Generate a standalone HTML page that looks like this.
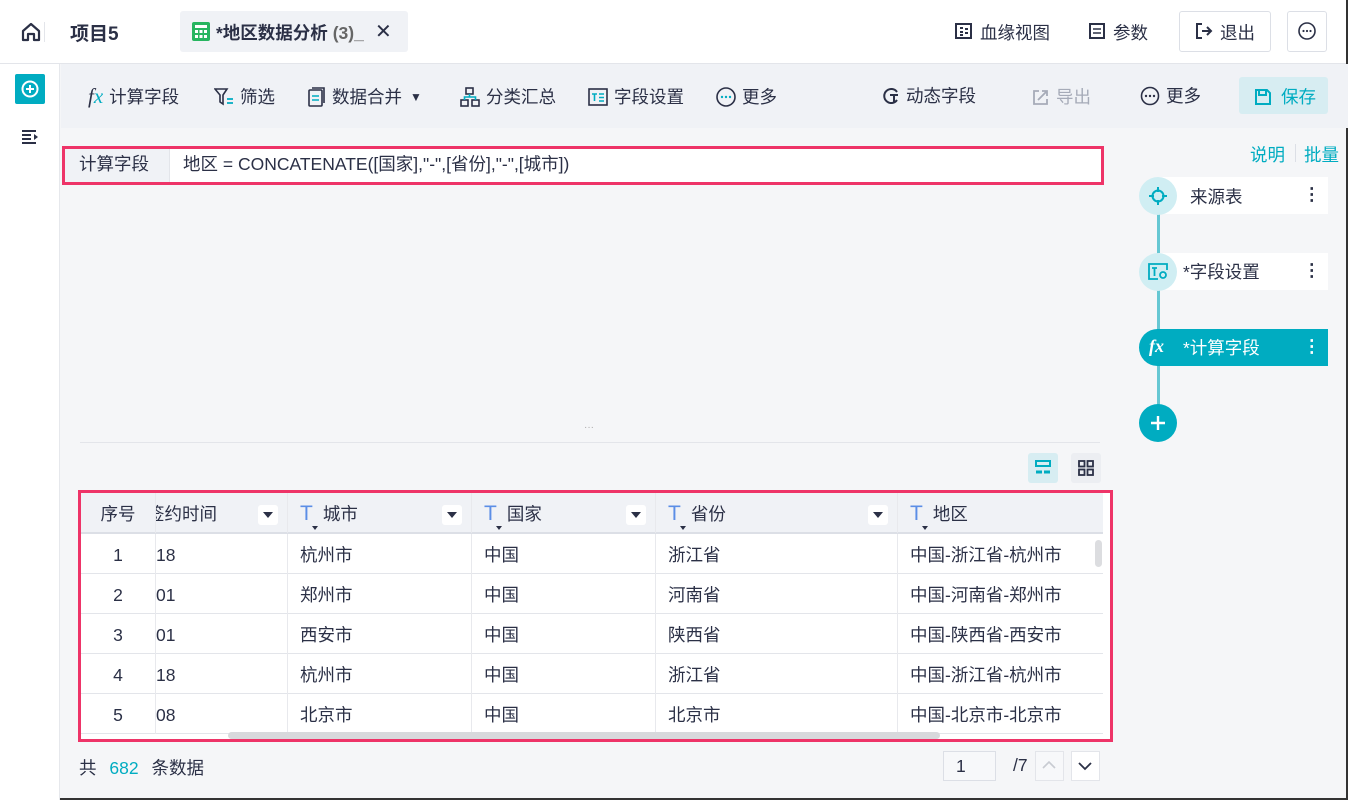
<!DOCTYPE html>
<html><head><meta charset="utf-8"><style>
*{box-sizing:border-box;margin:0;padding:0}
body{width:1348px;height:800px;overflow:hidden;background:#f5f6f8;font-family:"Liberation Sans","Noto Sans CJK SC",sans-serif;color:#2b3046;font-size:17.5px;position:relative}
.abs{position:absolute}
.hdr{left:0;top:0;width:1348px;height:64px;background:#fff;border-bottom:1px solid #e3e5ea}
.side{left:0;top:64px;width:60px;height:736px;background:#fff;border-right:1px solid #e6e8ec}
.tb{left:61px;top:64px;width:1287px;height:64px;background:#f0f2f6}
.ti{position:absolute;top:84px;display:flex;align-items:center;gap:6px;font-size:17.5px;color:#2b3046}
svg{display:block}
.table{left:78px;top:490px;width:1035px;height:252px;border:3px solid #ee3468;background:#fff;overflow:hidden}
.row{position:absolute;left:0;height:40px;width:1030px;border-bottom:1px solid #e3e5ea}
.c{position:absolute;top:0;height:40px;line-height:42px;font-size:17.5px;border-right:1px solid #e8e9ed;padding-left:12px;overflow:hidden;white-space:nowrap}
.th{background:#f0f2f6}
.dd{position:absolute;top:12px;width:20px;height:20px;background:#fff;border-radius:3px}
.dd:after{content:"";position:absolute;left:5px;top:7px;border:5px solid transparent;border-top:6px solid #2b3046;border-bottom:0}
.T{color:#5b8ee6;font-size:21px;position:relative;margin-right:10px}
.T:after{content:"";position:absolute;left:12px;top:24px;border:3px solid transparent;border-top:4px solid #2b3046}
</style></head><body>
<div class="abs hdr"></div>
<svg class="abs" style="left:20px;top:21px" width="22" height="22" viewBox="0 0 22 22"><path d="M3 10 L11 3 L19 10 V19 H14 V13 H8 V19 H3 Z" fill="none" stroke="#2b3046" stroke-width="2.2" stroke-linejoin="round"/></svg>
<div class="abs" style="left:44px;top:22px;width:1px;height:20px;background:#e3e5ea"></div>
<div class="abs" style="left:70px;top:19px;font-size:19px;font-weight:bold">项目5</div>
<div class="abs" style="left:180px;top:11px;width:228px;height:41px;background:#f0f2f6;border-radius:3px"></div>
<svg class="abs" style="left:192px;top:22px" width="18" height="19"><rect width="18" height="19" rx="2" fill="#27b560"/><g fill="#fff"><rect x="3" y="3" width="12" height="3"/><rect x="3" y="8" width="3" height="3"/><rect x="7.5" y="8" width="3" height="3"/><rect x="12" y="8" width="3" height="3"/><rect x="3" y="13" width="3" height="3"/><rect x="7.5" y="13" width="3" height="3"/><rect x="12" y="13" width="3" height="3"/></g></svg>
<div class="abs" style="left:216px;top:20px;font-size:17.5px;font-weight:bold;white-space:nowrap;width:152px;overflow:hidden">*地区数据分析 <span style="color:#666">(3)_</span></div>
<div class="abs" style="left:375px;top:19px;font-size:20px">✕</div>
<svg class="abs" style="left:955px;top:23px" width="17" height="16"><rect x="1" y="1" width="15" height="14" fill="none" stroke="#2b3046" stroke-width="2"/><path d="M5 5h3M5 9h3M10 6h3M10 10h3M5 12h3" stroke="#2b3046" stroke-width="2"/></svg>
<div class="abs" style="left:980px;top:20px">血缘视图</div>
<svg class="abs" style="left:1089px;top:23px" width="16" height="16"><rect x="1" y="1" width="14" height="14" fill="none" stroke="#2b3046" stroke-width="2"/><path d="M4 6h8M4 10h8" stroke="#2b3046" stroke-width="1.6"/></svg>
<div class="abs" style="left:1113px;top:20px">参数</div>
<div class="abs" style="left:1179px;top:11px;width:92px;height:41px;border:1px solid #dcdfe6;border-radius:3px;background:#fff"></div>
<svg class="abs" style="left:1195px;top:22px" width="18" height="18"><path d="M7 2H2V16H7M7 9H16M12 5L16 9 12 13" fill="none" stroke="#2b3046" stroke-width="2"/></svg>
<div class="abs" style="left:1220px;top:20px">退出</div>
<div class="abs" style="left:1287px;top:11px;width:40px;height:41px;border:1px solid #dcdfe6;border-radius:3px;background:#fff"></div>
<svg class="abs" style="left:1298px;top:22px" width="18" height="18"><circle cx="9" cy="9" r="8" fill="none" stroke="#2b3046" stroke-width="1.6"/><circle cx="5.5" cy="9" r="1.1" fill="#2b3046"/><circle cx="9" cy="9" r="1.1" fill="#2b3046"/><circle cx="12.5" cy="9" r="1.1" fill="#2b3046"/></svg>
<div class="abs" style="right:0;top:0;width:2px;height:800px;background:#333"></div>
<div class="abs" style="left:0;bottom:0;width:1348px;height:2px;background:#333"></div>

<div class="abs side"></div>
<div class="abs" style="left:15px;top:74px;width:30px;height:30px;background:#00acc1;border-radius:2px"></div>
<svg class="abs" style="left:21px;top:80px" width="18" height="18"><circle cx="9" cy="9" r="7.5" fill="none" stroke="#fff" stroke-width="2"/><path d="M9 5v8M5 9h8" stroke="#fff" stroke-width="2"/></svg>
<svg class="abs" style="left:22px;top:130px" width="16" height="14"><path d="M0 1h14M0 5h9M0 9h9M0 13h14" stroke="#2b3046" stroke-width="2"/><path d="M12 4l4 3-4 3z" fill="#2b3046"/></svg>

<div class="abs tb"></div>
<div class="ti" style="left:88px"><span style="font-family:'Liberation Serif',serif;font-style:italic;font-size:21px">f<span style="color:#00acc1">x</span></span>计算字段</div>
<div class="ti" style="left:214px"><svg width="20" height="18"><path d="M1 1h12l-4 6v9l-3-2V7z" fill="none" stroke="#2b3046" stroke-width="1.6"/><path d="M13 11h6M13 15h6" stroke="#00acc1" stroke-width="1.8"/></svg>筛选</div>
<div class="ti" style="left:308px"><svg width="18" height="20"><rect x="1" y="3" width="13" height="16" rx="1" fill="none" stroke="#2b3046" stroke-width="1.6"/><path d="M4 1h12v15" fill="none" stroke="#2b3046" stroke-width="1.6"/><path d="M4 9h7M4 13h7" stroke="#00acc1" stroke-width="1.6"/></svg>数据合并 <span style="font-size:12px;margin-left:2px">▼</span></div>
<div class="ti" style="left:460px"><svg width="20" height="20"><rect x="6" y="1" width="7" height="6" fill="none" stroke="#2b3046" stroke-width="1.6"/><rect x="1" y="13" width="7" height="6" fill="none" stroke="#2b3046" stroke-width="1.6"/><rect x="12" y="13" width="7" height="6" fill="none" stroke="#2b3046" stroke-width="1.6"/><path d="M9.5 7v3H4.5v3M9.5 10h6v3" fill="none" stroke="#00acc1" stroke-width="1.6"/></svg>分类汇总</div>
<div class="ti" style="left:588px"><svg width="20" height="18"><rect x="1" y="1" width="18" height="16" fill="none" stroke="#2b3046" stroke-width="1.6"/><path d="M4 6h5M6.5 6v7M11 6h5M11 9.5h5M11 13h5" stroke="#00acc1" stroke-width="1.6"/></svg>字段设置</div>
<div class="ti" style="left:716px"><svg width="20" height="20"><circle cx="10" cy="10" r="9" fill="none" stroke="#2b3046" stroke-width="1.6"/><circle cx="6" cy="10" r="1.2" fill="#00acc1"/><circle cx="10" cy="10" r="1.2" fill="#00acc1"/><circle cx="14" cy="10" r="1.2" fill="#00acc1"/></svg>更多</div>
<div class="ti" style="left:882px;top:83px"><svg width="18" height="18"><path d="M15 5A7 7 0 1 0 15 13" fill="none" stroke="#2b3046" stroke-width="2"/><path d="M8 8h8M12 8v8" stroke="#2b3046" stroke-width="2"/></svg>动态字段</div>
<div class="ti" style="left:1032px;color:#a6abb8"><svg width="18" height="18"><path d="M7 3H2v13h13v-5" fill="none" stroke="#a6abb8" stroke-width="1.8"/><path d="M6 12l9-9M10 3h5v5" fill="none" stroke="#a6abb8" stroke-width="1.8"/></svg>导出</div>
<div class="ti" style="left:1140px;top:83px"><svg width="20" height="20"><circle cx="10" cy="10" r="8.5" fill="none" stroke="#2b3046" stroke-width="1.6"/><circle cx="6" cy="10" r="1.2" fill="#2b3046"/><circle cx="10" cy="10" r="1.2" fill="#2b3046"/><circle cx="14" cy="10" r="1.2" fill="#2b3046"/></svg>更多</div>
<div class="abs" style="left:1239px;top:77px;width:89px;height:37px;background:#d7edf2;border-radius:3px"></div>
<div class="ti" style="left:1255px;color:#00acc1;gap:10px"><svg width="16" height="16"><path d="M1 1h11l3 3v11H1z" fill="none" stroke="#00acc1" stroke-width="2"/><path d="M4 1v5h7V1" fill="none" stroke="#00acc1" stroke-width="2"/></svg>保存</div>

<div class="abs" style="left:62px;top:146px;width:1042px;height:39px;border:3px solid #ee3468;background:#fff"></div>
<div class="abs" style="left:65px;top:149px;width:105px;height:33px;background:#f0f2f6;border-right:1px solid #e3e5ea;padding-left:14px;line-height:31px">计算字段</div>
<div class="abs" style="left:183px;top:149px;line-height:31px">地区 = CONCATENATE([国家],"-",[省份],"-",[城市])</div>

<div class="abs" style="left:80px;top:442px;width:1020px;height:1px;background:#e3e5ea"></div>
<div class="abs" style="left:584px;top:422px;color:#aaa;font-size:10px">···</div>
<div class="abs" style="left:1028px;top:453px;width:30px;height:30px;background:#d7edf2;border-radius:3px"></div>
<svg class="abs" style="left:1035px;top:459px" width="16" height="17"><path d="M1 2h14v5H1z" fill="none" stroke="#00acc1" stroke-width="2"/><path d="M1 13h6M9 13h6" stroke="#00acc1" stroke-width="3"/></svg>
<div class="abs" style="left:1071px;top:453px;width:30px;height:30px;background:#eceef2;border-radius:3px"></div>
<svg class="abs" style="left:1078px;top:460px" width="16" height="16"><g fill="none" stroke="#2b3046" stroke-width="1.8"><rect x="1" y="1" width="5.5" height="5.5"/><rect x="9.5" y="1" width="5.5" height="5.5"/><rect x="1" y="9.5" width="5.5" height="5.5"/><rect x="9.5" y="9.5" width="5.5" height="5.5"/></g></svg>

<div class="abs table">
 <div class="row th" style="top:0;height:41px;border-bottom:2px solid #dcdfe6">
  <div class="c" style="left:0;width:75px;padding:0;text-align:center">序号</div>
  <div class="c" style="left:75px;width:132px;padding-left:0"><span style="margin-left:-9px">签约时间</span><div class="dd" style="left:102px"></div></div>
  <div class="c" style="left:207px;width:184px"><span class="T">T</span>城市<div class="dd" style="left:154px"></div></div>
  <div class="c" style="left:391px;width:184px"><span class="T">T</span>国家<div class="dd" style="left:154px"></div></div>
  <div class="c" style="left:575px;width:242px"><span class="T">T</span>省份<div class="dd" style="left:212px"></div></div>
  <div class="c" style="left:817px;width:220px"><span class="T">T</span>地区</div>
 </div>
 <div class="row" style="top:41px"><div class="c" style="left:0;width:75px;padding:0;text-align:center">1</div><div class="c" style="left:75px;width:132px;padding-left:0">18</div><div class="c" style="left:207px;width:184px">杭州市</div><div class="c" style="left:391px;width:184px">中国</div><div class="c" style="left:575px;width:242px">浙江省</div><div class="c" style="left:817px;width:220px">中国-浙江省-杭州市</div></div>
 <div class="row" style="top:81px"><div class="c" style="left:0;width:75px;padding:0;text-align:center">2</div><div class="c" style="left:75px;width:132px;padding-left:0">01</div><div class="c" style="left:207px;width:184px">郑州市</div><div class="c" style="left:391px;width:184px">中国</div><div class="c" style="left:575px;width:242px">河南省</div><div class="c" style="left:817px;width:220px">中国-河南省-郑州市</div></div>
 <div class="row" style="top:121px"><div class="c" style="left:0;width:75px;padding:0;text-align:center">3</div><div class="c" style="left:75px;width:132px;padding-left:0">01</div><div class="c" style="left:207px;width:184px">西安市</div><div class="c" style="left:391px;width:184px">中国</div><div class="c" style="left:575px;width:242px">陕西省</div><div class="c" style="left:817px;width:220px">中国-陕西省-西安市</div></div>
 <div class="row" style="top:161px"><div class="c" style="left:0;width:75px;padding:0;text-align:center">4</div><div class="c" style="left:75px;width:132px;padding-left:0">18</div><div class="c" style="left:207px;width:184px">杭州市</div><div class="c" style="left:391px;width:184px">中国</div><div class="c" style="left:575px;width:242px">浙江省</div><div class="c" style="left:817px;width:220px">中国-浙江省-杭州市</div></div>
 <div class="row" style="top:201px"><div class="c" style="left:0;width:75px;padding:0;text-align:center">5</div><div class="c" style="left:75px;width:132px;padding-left:0">08</div><div class="c" style="left:207px;width:184px">北京市</div><div class="c" style="left:391px;width:184px">中国</div><div class="c" style="left:575px;width:242px">北京市</div><div class="c" style="left:817px;width:220px">中国-北京市-北京市</div></div>
 <div class="abs" style="left:1022px;top:0;width:10px;height:250px;background:#fff"></div>
 <div class="abs" style="left:1014px;top:47px;width:7px;height:27px;background:#dcdde0;border-radius:4px"></div>
 <div class="abs" style="left:147px;top:239px;width:712px;height:7px;background:#d8d9dc;border-radius:4px"></div>
</div>

<div class="abs" style="left:79px;top:755px">共 <span style="color:#00acc1;margin:0 8px">682</span> 条数据</div>
<div class="abs" style="left:943px;top:751px;width:53px;height:30px;border:1px solid #dcdfe6;background:#f7f8fa;padding-left:12px;line-height:28px">1</div>
<div class="abs" style="left:1013px;top:755px">/7</div>
<div class="abs" style="left:1035px;top:751px;width:29px;height:30px;border:1px solid #e3e5ea;background:#f7f8fa"></div>
<svg class="abs" style="left:1042px;top:760px" width="14" height="10"><path d="M1 8l6-6 6 6" fill="none" stroke="#c8cbd2" stroke-width="1.6"/></svg>
<div class="abs" style="left:1071px;top:751px;width:29px;height:30px;border:1px solid #e3e5ea;background:#fff"></div>
<svg class="abs" style="left:1078px;top:761px" width="14" height="10"><path d="M1 2l6 6 6-6" fill="none" stroke="#2b3046" stroke-width="1.8"/></svg>

<div class="abs" style="left:1250px;top:142px;color:#00acc1">说明</div>
<div class="abs" style="left:1295px;top:144px;width:1px;height:18px;background:#dcdfe6"></div>
<div class="abs" style="left:1304px;top:142px;color:#00acc1">批量</div>
<div class="abs" style="left:1157px;top:200px;width:3px;height:230px;background:#66c7d3"></div>
<div class="abs" style="left:1158px;top:177px;width:170px;height:37px;background:#fff"></div>
<div class="abs" style="left:1139px;top:177px;width:38px;height:38px;border-radius:50%;background:#d0eef3"></div>
<svg class="abs" style="left:1149px;top:187px" width="18" height="18"><circle cx="9" cy="9" r="5.5" fill="none" stroke="#00acc1" stroke-width="2"/><path d="M9 0v5M9 13v5M0 9h5M13 9h5" stroke="#00acc1" stroke-width="2"/></svg>
<div class="abs" style="left:1190px;top:184px">来源表</div>
<div class="abs" style="left:1303px;top:184px;font-weight:bold">⋮</div>
<div class="abs" style="left:1158px;top:253px;width:170px;height:37px;background:#fff"></div>
<div class="abs" style="left:1139px;top:253px;width:38px;height:38px;border-radius:50%;background:#d0eef3"></div>
<svg class="abs" style="left:1148px;top:263px" width="20" height="17"><path d="M19 7V1H1v15h9" fill="none" stroke="#00acc1" stroke-width="1.8"/><path d="M4 5h5M6.5 5v8" stroke="#00acc1" stroke-width="1.8"/><circle cx="15" cy="12" r="3" fill="none" stroke="#00acc1" stroke-width="1.8"/></svg>
<div class="abs" style="left:1183px;top:259px">*字段设置</div>
<div class="abs" style="left:1303px;top:260px;font-weight:bold">⋮</div>
<div class="abs" style="left:1139px;top:329px;width:189px;height:37px;background:#00acc1;border-radius:19px 0 0 19px"></div>
<div class="abs" style="left:1149px;top:336px;color:#fff;font-style:italic;font-weight:bold;font-family:'Liberation Serif',serif;font-size:18px">fx</div>
<div class="abs" style="left:1183px;top:335px;color:#fff">*计算字段</div>
<div class="abs" style="left:1303px;top:336px;color:#fff;font-weight:bold">⋮</div>
<div class="abs" style="left:1139px;top:404px;width:38px;height:38px;border-radius:50%;background:#00acc1"></div>
<svg class="abs" style="left:1149px;top:414px" width="18" height="18"><path d="M9 2v14M2 9h14" stroke="#fff" stroke-width="2.4"/></svg>
</body></html>
